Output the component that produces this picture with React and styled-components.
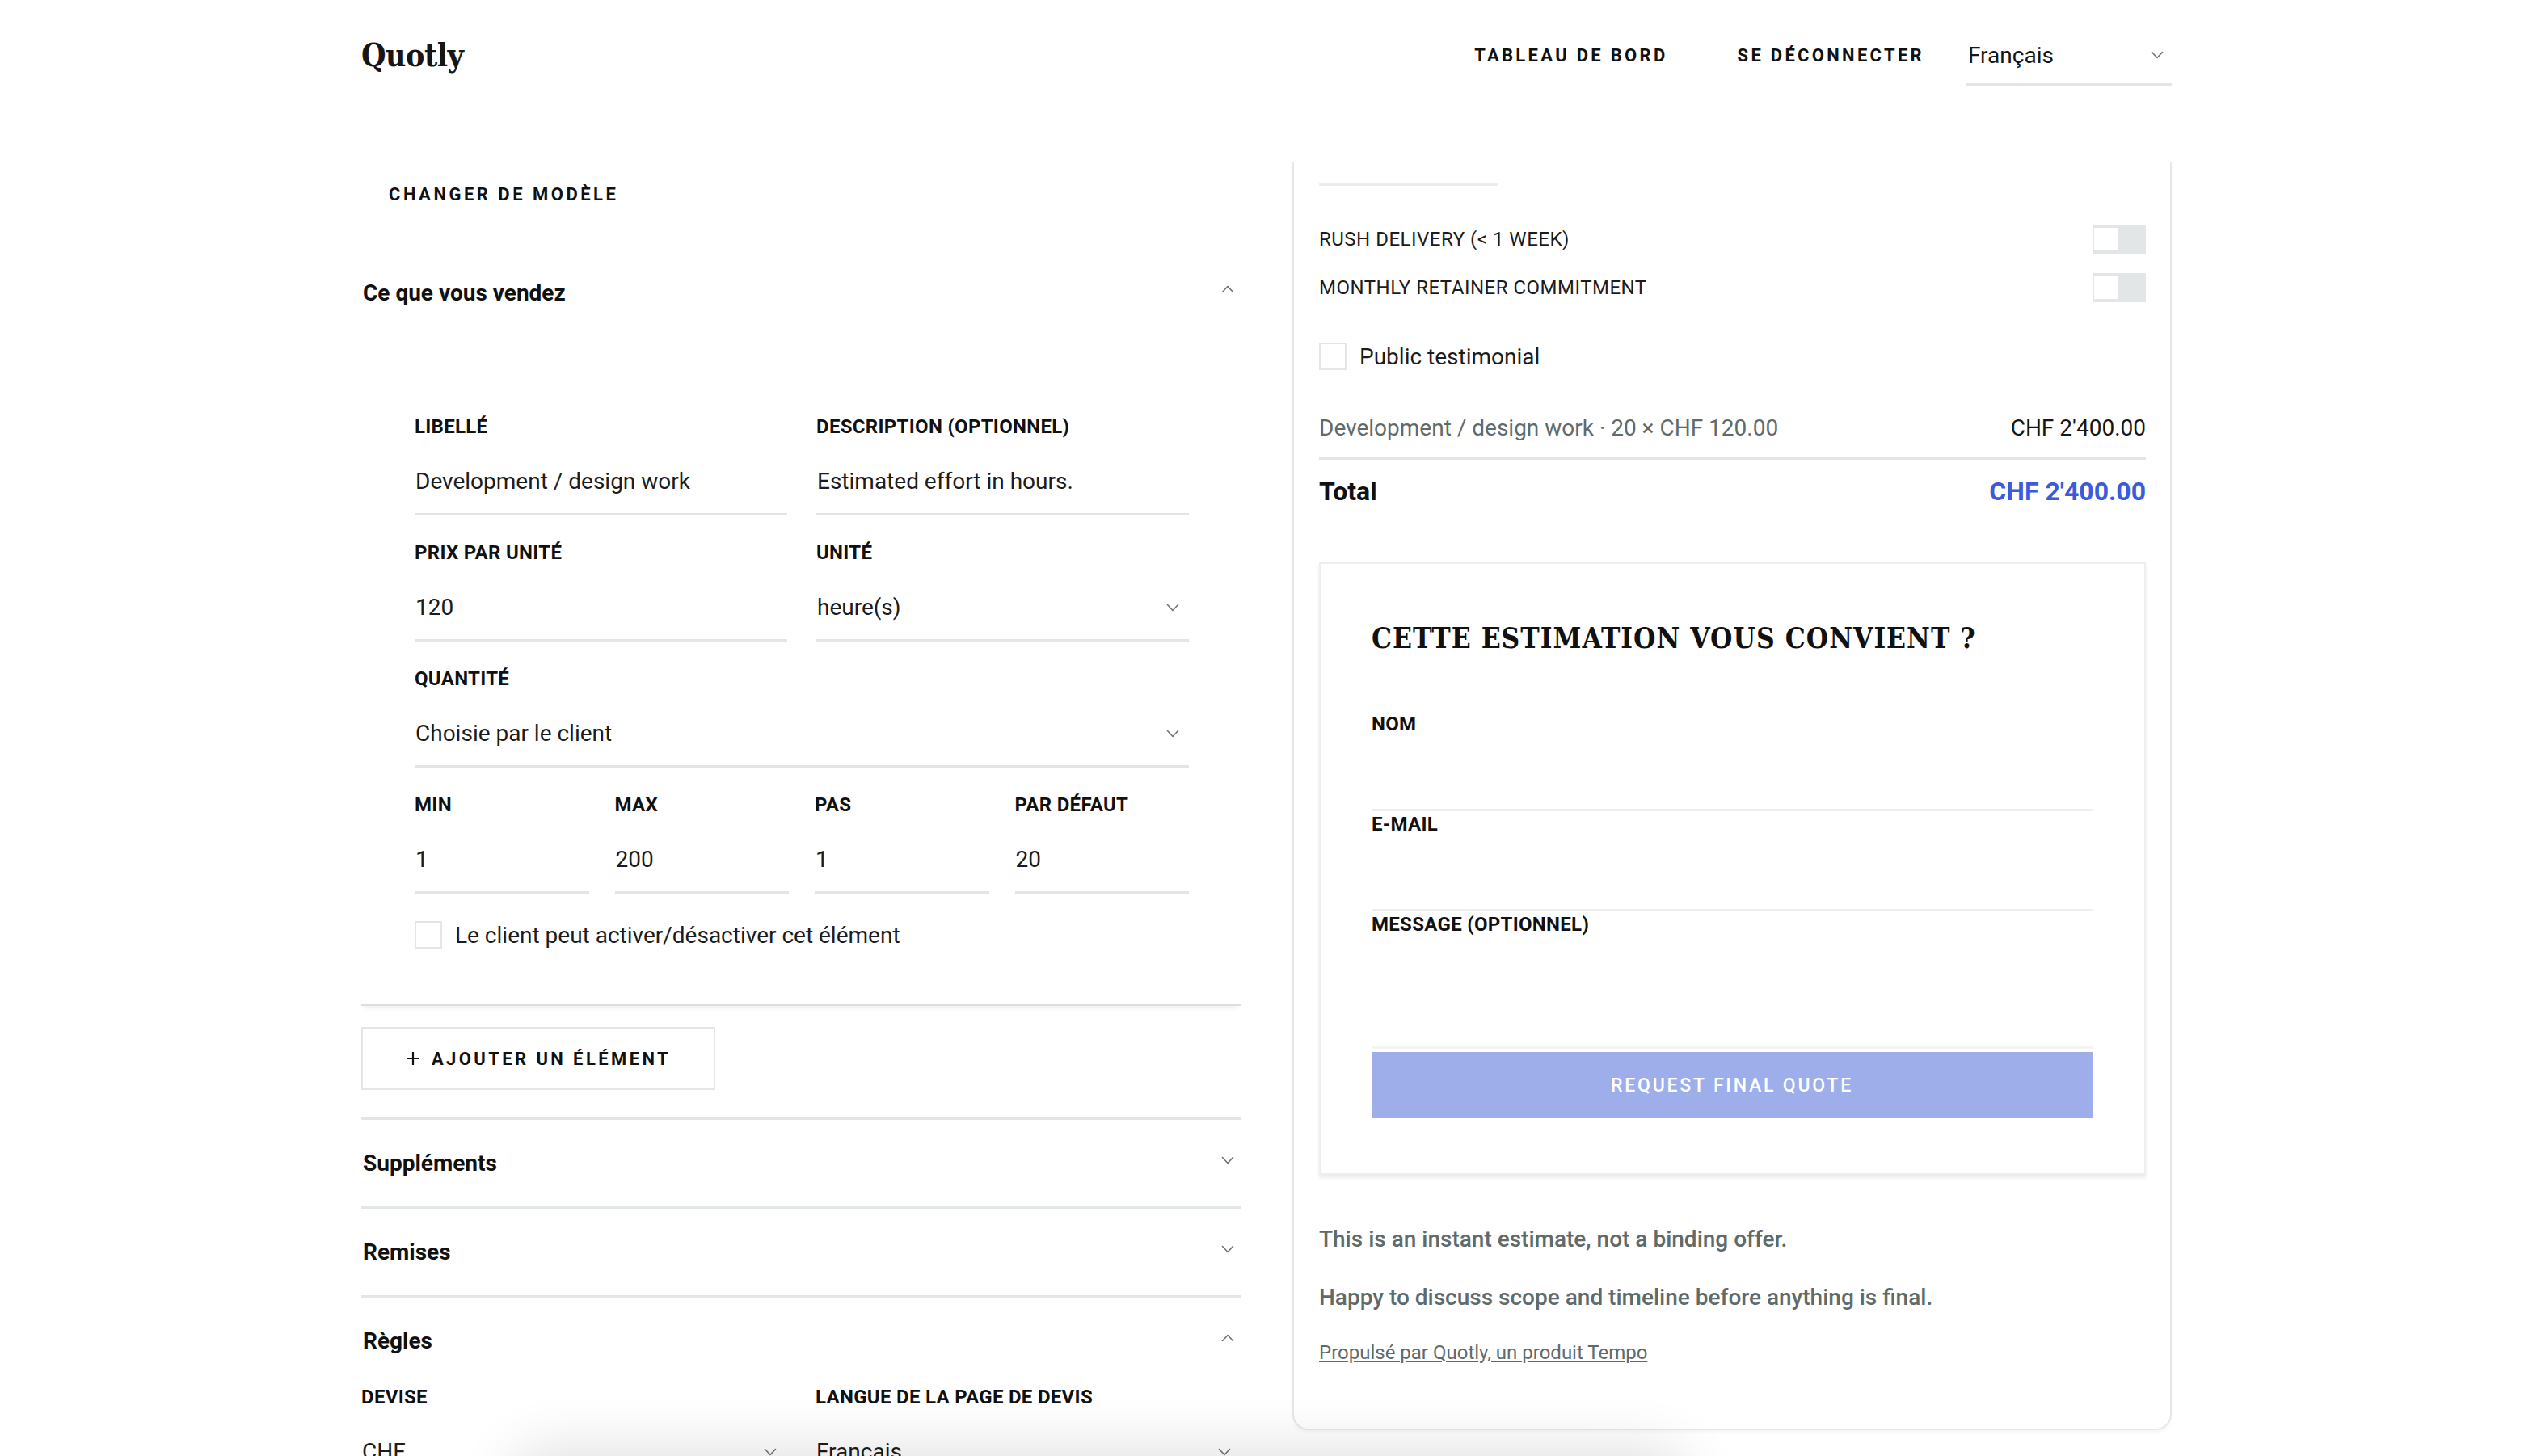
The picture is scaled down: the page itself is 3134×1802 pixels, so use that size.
import React from 'react';
import styled, { createGlobalStyle } from 'styled-components';

const GlobalStyle = createGlobalStyle`
  * { box-sizing: border-box; }
  body {
    margin: 0;
    background: #ffffff;
    font-family: Roboto, "Liberation Sans", Arial, sans-serif;
    color: #161616;
  }
`;

const line = '#e2e6e6';
const muted = '#5f6b6b';
const slab = `"DejaVu Serif Condensed", "DejaVu Serif", Georgia, serif`;

const Header = styled.header`
  max-width: 2240px;
  margin: 0 auto;
  height: 136px;
  display: flex;
  align-items: center;
`;

const Logo = styled.div`
  font-family: ${slab};
  font-stretch: condensed;
  font-weight: 700;
  font-size: 39px;
  letter-spacing: -0.5px;
`;

const Nav = styled.nav`
  margin-left: auto;
  display: flex;
  align-items: center;
  gap: 52px;
`;

const NavLinks = styled.div`
  display: flex;
  gap: 86px;
`;

const NavLink = styled.a`
  font-weight: 700;
  font-size: 22px;
  letter-spacing: 3.3px;
  text-transform: uppercase;
  color: #111;
  cursor: pointer;
`;

const LangSelect = styled.div`
  width: 254px;
  height: 76px;
  display: flex;
  align-items: center;
  justify-content: space-between;
  padding: 3px 10px 0 2px;
  border-bottom: 3px solid ${line};
  font-size: 28px;
  color: #161616;
`;

const Main = styled.main`
  max-width: 2240px;
  margin: 0 auto;
  display: grid;
  grid-template-columns: 1088px 1088px;
  column-gap: 64px;
  align-items: start;
`;

const LeftColumn = styled.div`
  display: flex;
  flex-direction: column;
`;

const TextButton = styled.button`
  align-self: flex-start;
  margin-top: 68px;
  height: 72px;
  padding: 0 34px;
  border: none;
  background: none;
  font-family: inherit;
  font-weight: 700;
  font-size: 22px;
  letter-spacing: 3.5px;
  color: #111;
  cursor: pointer;
`;

const Section = styled.section`
  border-top: ${(p) => (p.$bordered ? `3px solid ${line}` : 'none')};
`;

const SectionHead = styled.div`
  height: ${(p) => p.$height || 107}px;
  margin-top: ${(p) => p.$offset || 0}px;
  display: flex;
  align-items: center;
  justify-content: space-between;
  padding: 0 8px 0 2px;
  font-weight: 700;
  font-size: 28px;
  color: #111;

  svg {
    margin-top: -8px;
  }
`;

const ItemPanel = styled.div`
  padding: 100px 64px 68px 66px;
  border-bottom: 3px solid #dcdfdf;
  box-shadow: 0 6px 6px -4px rgba(0, 0, 0, 0.08);
  display: flex;
  flex-direction: column;
  gap: 30px;
`;

const FieldGrid = styled.div`
  display: grid;
  grid-template-columns: repeat(${(p) => p.$cols}, 1fr);
  column-gap: ${(p) => p.$gap}px;
  row-gap: 30px;
`;

const Field = styled.div`
  display: flex;
  flex-direction: column;
`;

const Label = styled.div`
  font-weight: 700;
  font-size: 24px;
  line-height: 32px;
  letter-spacing: 0.3px;
  text-transform: uppercase;
  color: #111;
`;

const Input = styled.div`
  margin-top: 12px;
  height: 82px;
  display: flex;
  align-items: center;
  justify-content: space-between;
  padding: 0 12px 0 1px;
  border-bottom: 3px solid ${line};
  font-size: 28px;
  color: #1c1c1c;
`;

const CheckRow = styled.label`
  display: flex;
  align-items: center;
  gap: 16px;
  margin-top: ${(p) => p.$offset || 0}px;
  font-size: 28px;
  color: #1c1c1c;
`;

const Box = styled.span`
  width: 34px;
  height: 34px;
  border: 2px solid ${line};
  background: #fff;
  flex: none;
`;

const AddButton = styled.button`
  align-self: flex-start;
  margin-top: 26px;
  margin-bottom: 34px;
  width: 438px;
  height: 78px;
  display: flex;
  align-items: center;
  justify-content: center;
  gap: 14px;
  border: 2px solid ${line};
  background: #fff;
  font-family: inherit;
  font-weight: 700;
  font-size: 22px;
  letter-spacing: 3.4px;
  color: #111;
`;

const RightColumn = styled.aside`
  margin-top: 64px;
  border: 2px solid #e6e8e8;
  border-top: none;
  border-radius: 0 0 20px 20px;
  padding: 26px 30px 80px 31px;
  box-shadow: 0 3px 4px rgba(0, 0, 0, 0.04);
`;

const Stub = styled.div`
  width: 222px;
  height: 4px;
  background: #eceeee;
  margin-bottom: 36px;
`;

const ToggleRow = styled.div`
  height: 60px;
  display: flex;
  align-items: center;
  justify-content: space-between;
  font-size: 24px;
  letter-spacing: 0.5px;
  text-transform: uppercase;
  color: #1c1c1c;
`;

const Toggle = styled.span`
  width: 66px;
  height: 36px;
  padding: 4px 0 4px 2px;
  background: ${line};
  display: flex;
  &::before {
    content: '';
    width: 30px;
    height: 28px;
    background: #fff;
  }
`;

const LineItem = styled.div`
  margin-top: 50px;
  padding-bottom: 14px;
  border-bottom: 3px solid ${line};
  display: flex;
  justify-content: space-between;
  font-size: 28px;
  line-height: 44px;
  color: ${(p) => (p.$muted ? muted : '#161616')};
`;

const Amount = styled.span`
  color: ${(p) => (p.$accent ? '#3b5bdb' : '#161616')};
`;

const TotalRow = styled.div`
  padding-top: 20px;
  display: flex;
  justify-content: space-between;
  font-weight: 700;
  font-size: 32px;
  line-height: 38px;
  color: #111;
`;

const FormCard = styled.div`
  margin-top: 69px;
  border: 2px solid #eeeeee;
  padding: 69px 64px 68px 63px;
  box-shadow: 0 4px 5px rgba(0, 0, 0, 0.08);
  display: flex;
  flex-direction: column;
`;

const FormTitle = styled.h2`
  margin: 0 0 69px;
  font-family: ${slab};
  font-stretch: condensed;
  font-weight: 700;
  font-size: 35px;
  line-height: 46px;
  letter-spacing: 1px;
  color: #111;
`;

const FormLabel = styled.div`
  font-weight: 700;
  font-size: 24px;
  line-height: 28px;
  letter-spacing: 0.3px;
  color: #111;
`;

const FormInput = styled.div`
  height: ${(p) => p.$height}px;
  border-bottom: 3px solid ${(p) => (p.$faint ? '#f3f4f4' : '#eeeeee')};
  margin-bottom: 2px;
`;

const Submit = styled.button`
  margin-top: 2px;
  height: 82px;
  border: none;
  background: #9daeeb;
  color: #fff;
  font-family: inherit;
  font-weight: 500;
  font-size: 23px;
  letter-spacing: 2.8px;
`;

const Note = styled.p`
  margin: ${(p) => p.$top}px 0 0;
  font-weight: 500;
  font-size: 28px;
  line-height: 40px;
  color: ${muted};
`;

const Powered = styled.a`
  display: inline-block;
  margin-top: 34px;
  font-size: 24px;
  color: ${muted};
  text-decoration: underline;
`;

const BottomShadow = styled.div`
  position: fixed;
  left: 640px;
  bottom: -90px;
  width: 1440px;
  height: 90px;
  border-radius: 40px;
  box-shadow: 0 0 70px 10px rgba(0, 0, 0, 0.12);
  pointer-events: none;
`;

const Chevron = ({ up, color = '#6b7474' }) => (
  <svg width="16" height="10" viewBox="0 0 16 10" fill="none">
    <path
      d={up ? 'M1.5 8.5 L8 1.5 L14.5 8.5' : 'M1.5 1.5 L8 8.5 L14.5 1.5'}
      stroke={color}
      strokeWidth="1.6"
      strokeLinecap="round"
      strokeLinejoin="round"
    />
  </svg>
);

const Plus = () => (
  <svg width="18" height="18" viewBox="0 0 18 18" fill="none">
    <path d="M9 1v16M1 9h16" stroke="#111" strokeWidth="2.2" />
  </svg>
);

const TextField = ({ label, value, select }) => (
  <Field>
    <Label>{label}</Label>
    <Input>
      <span>{value}</span>
      {select && <Chevron />}
    </Input>
  </Field>
);

const collapsed = ['Suppléments', 'Remises'];

const App = () => (
  <>
    <GlobalStyle />
    <Header>
      <Logo>Quotly</Logo>
      <Nav>
        <NavLinks>
          <NavLink>Tableau de bord</NavLink>
          <NavLink>Se déconnecter</NavLink>
        </NavLinks>
        <LangSelect>
          <span>Français</span>
          <Chevron />
        </LangSelect>
      </Nav>
    </Header>

    <Main>
      <LeftColumn>
        <TextButton>CHANGER DE MODÈLE</TextButton>

        <Section>
          <SectionHead $height={100} $offset={36}>
            <span>Ce que vous vendez</span>
            <Chevron up />
          </SectionHead>
          <ItemPanel>
            <FieldGrid $cols={2} $gap={36}>
              <TextField label="Libellé" value="Development / design work" />
              <TextField label="Description (optionnel)" value="Estimated effort in hours." />
              <TextField label="Prix par unité" value="120" />
              <TextField label="Unité" value="heure(s)" select />
            </FieldGrid>
            <TextField label="Quantité" value="Choisie par le client" select />
            <FieldGrid $cols={4} $gap={32}>
              <TextField label="Min" value="1" />
              <TextField label="Max" value="200" />
              <TextField label="Pas" value="1" />
              <TextField label="Par défaut" value="20" />
            </FieldGrid>
            <CheckRow $offset={4}>
              <Box />
              Le client peut activer/désactiver cet élément
            </CheckRow>
          </ItemPanel>
        </Section>

        <AddButton>
          <Plus />
          AJOUTER UN ÉLÉMENT
        </AddButton>

        {collapsed.map((title) => (
          <Section key={title} $bordered>
            <SectionHead>
              <span>{title}</span>
              <Chevron />
            </SectionHead>
          </Section>
        ))}

        <Section $bordered>
          <SectionHead>
            <span>Règles</span>
            <Chevron up />
          </SectionHead>
          <FieldGrid $cols={2} $gap={36}>
            <TextField label="Devise" value="CHF" select />
            <TextField label="Langue de la page de devis" value="Français" select />
          </FieldGrid>
        </Section>
      </LeftColumn>

      <RightColumn>
        <Stub />
        <ToggleRow>
          Rush delivery (&lt; 1 week)
          <Toggle />
        </ToggleRow>
        <ToggleRow>
          Monthly retainer commitment
          <Toggle />
        </ToggleRow>
        <CheckRow $offset={38}>
          <Box />
          Public testimonial
        </CheckRow>

        <LineItem $muted>
          <span>Development / design work · 20 × CHF 120.00</span>
          <Amount>CHF 2'400.00</Amount>
        </LineItem>
        <TotalRow>
          <span>Total</span>
          <Amount $accent>CHF 2'400.00</Amount>
        </TotalRow>

        <FormCard>
          <FormTitle>CETTE ESTIMATION VOUS CONVIENT ?</FormTitle>
          <FormLabel>NOM</FormLabel>
          <FormInput $height={94} />
          <FormLabel>E-MAIL</FormLabel>
          <FormInput $height={94} />
          <FormLabel>MESSAGE (OPTIONNEL)</FormLabel>
          <FormInput $height={140} $faint />
          <Submit>REQUEST FINAL QUOTE</Submit>
        </FormCard>

        <Note $top={60}>This is an instant estimate, not a binding offer.</Note>
        <Note $top={32}>Happy to discuss scope and timeline before anything is final.</Note>
        <Powered>Propulsé par Quotly, un produit Tempo</Powered>
      </RightColumn>
    </Main>
    <BottomShadow />
  </>
);

export default App;
